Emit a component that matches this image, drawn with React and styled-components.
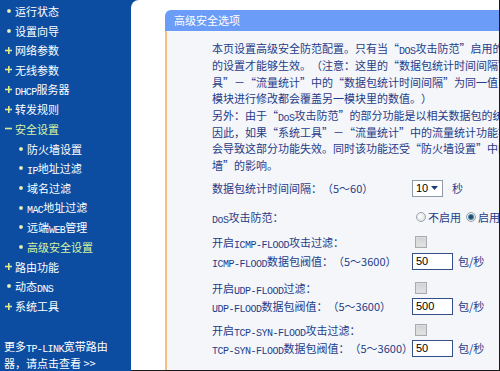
import React from 'react';
import styled, { createGlobalStyle } from 'styled-components';

const Global = createGlobalStyle`
  html, body { margin: 0; padding: 0; }
  body {
    width: 500px;
    height: 371px;
    overflow: hidden;
    font-family: "Noto Sans CJK SC", sans-serif;
    text-spacing-trim: space-all;
  }
`;

const Page = styled.div`
  display: flex;
  width: 500px;
  height: 371px;
  background: #0c4da2;
  overflow: hidden;
`;

const Sidebar = styled.nav`
  width: 131px;
  flex: none;
  display: flex;
  flex-direction: column;
  padding-top: 1px;
  box-sizing: border-box;
  font-size: 11px;
  color: #fff;
`;

const Item = styled.div`
  height: 19.87px;
  display: flex;
  align-items: center;
  padding-left: ${(p) => (p.$sub ? 16 : 4)}px;
  color: ${(p) => (p.$active ? '#d8f4a0' : '#ffffff')};
  white-space: nowrap;
`;

const Label = styled.span`
  line-height: 16px;
`;

const Mark = styled.span`
  width: 9px;
  height: 9px;
  margin-right: 2px;
  display: inline-flex;
  align-items: center;
  justify-content: center;
  flex: none;
`;

const SideLat = styled.span`
  font-family: "Liberation Mono", monospace;
  font-size: 10px;
  line-height: 1;
  letter-spacing: -0.6px;
  vertical-align: -1px;
`;

const Lat = styled.span`
  font-family: "Liberation Mono", monospace;
  font-size: 10px;
  line-height: 1;
  letter-spacing: -0.5px;
  vertical-align: -1px;
`;

const Promo = styled.div`
  margin-top: 22px;
  padding-left: 4px;
  line-height: 16px;
  color: #fff;
  white-space: nowrap;
`;

const Main = styled.main`
  flex: 1;
  display: flex;
  flex-direction: column;
  background: #ffffff;
  border-top-left-radius: 8px;
  border-right: 1px solid #1a1a1a;
  border-bottom: 1px solid #1a1a1a;
  padding: 10px 0 0 34px;
  box-sizing: border-box;
  overflow: hidden;
  min-width: 0;
`;

const Panel = styled.section`
  flex: 1;
  width: 420px;
  display: flex;
  flex-direction: column;
`;

const PanelHead = styled.h2`
  margin: 0;
  height: 21px;
  line-height: 21px;
  padding-left: 9px;
  background: #6b9cf7;
  border-top-left-radius: 6px;
  color: #fff;
  font-size: 11px;
  font-weight: normal;
  white-space: nowrap;
`;

const PanelBody = styled.div`
  flex: 1;
  background: #f4f6fa;
  border-left: 2px solid #f3c07f;
  padding: 9px 0 0 45px;
  color: #1f3c88;
  font-size: 11px;
`;

const Para = styled.div`
  line-height: 16.5px;
  white-space: nowrap;
`;

const Row = styled.div`
  display: grid;
  grid-template-columns: 200px auto;
  align-items: center;
  height: 18px;
  margin-top: ${(p) => p.$mt || 0}px;
  white-space: nowrap;
`;

const Ctl = styled.div`
  display: flex;
  align-items: center;
`;

const SelectBox = styled.div`
  width: 31px;
  height: 17px;
  box-sizing: border-box;
  border: 1px solid #8e9aa6;
  background: #fff;
  display: flex;
  align-items: center;
  justify-content: space-between;
  padding: 0 4px 0 3px;
  font-family: "Liberation Sans", sans-serif;
  font-size: 11px;
  color: #000;
`;

const Unit = styled.span`
  margin-left: ${(p) => p.$ml || 0}px;
`;

const RadioDot = styled.span`
  width: 10px;
  height: 10px;
  box-sizing: border-box;
  border-radius: 50%;
  border: 1px solid #9aa4ad;
  background: radial-gradient(circle at 40% 40%, #ffffff, #d6d8da);
  margin: 0 2px 0 ${(p) => p.$ml || 0}px;
  display: inline-flex;
  align-items: center;
  justify-content: center;
  &::after {
    content: '';
    display: ${(p) => (p.$on ? 'block' : 'none')};
    width: 4px;
    height: 4px;
    border-radius: 50%;
    background: #1f4e6c;
    box-shadow: 0 0 0 1px #4b86a8;
  }
`;

const Check = styled.span`
  width: 12px;
  height: 12px;
  box-sizing: border-box;
  margin-left: 3px;
  border: 1px solid #a9abae;
  background: linear-gradient(#cfd0d2, #e4e5e6);
  box-shadow: inset 0 0 0 1px #dcdcdc;
`;

const NumInput = styled.div`
  width: 41px;
  height: 17px;
  box-sizing: border-box;
  border: 1px solid #34508a;
  background: #fff;
  padding-left: 3px;
  display: flex;
  align-items: center;
  font-family: "Liberation Sans", sans-serif;
  font-size: 11px;
  color: #000;
`;

function Bullet({ kind }) {
  const c = '#dcec8c';
  if (kind === 'plus')
    return (
      <svg width="7" height="7" viewBox="0 0 7 7">
        <rect x="3" y="0" width="1.6" height="7" fill={c} />
        <rect x="0" y="2.7" width="7" height="1.6" fill={c} />
      </svg>
    );
  if (kind === 'minus')
    return (
      <svg width="7" height="7" viewBox="0 0 7 7">
        <rect x="0" y="2.7" width="7" height="1.6" fill={c} />
      </svg>
    );
  return (
    <svg width="4" height="4" viewBox="0 0 4 4">
      <rect x="0.3" y="0.3" width="3.4" height="3.4" rx="1" fill="#eef5b4" />
    </svg>
  );
}

const menu = [
  { k: 'dot', t: '运行状态' },
  { k: 'dot', t: '设置向导' },
  { k: 'plus', t: '网络参数' },
  { k: 'plus', t: '无线参数' },
  { k: 'plus', t: <><SideLat>DHCP</SideLat>服务器</> },
  { k: 'plus', t: '转发规则' },
  { k: 'minus', t: '安全设置', active: true },
  { k: 'dot', t: '防火墙设置', sub: true },
  { k: 'dot', t: <><SideLat>IP</SideLat>地址过滤</>, sub: true },
  { k: 'dot', t: '域名过滤', sub: true },
  { k: 'dot', t: <><SideLat>MAC</SideLat>地址过滤</>, sub: true },
  { k: 'dot', t: <>远端<SideLat>WEB</SideLat>管理</>, sub: true },
  { k: 'dot', t: '高级安全设置', sub: true, active: true },
  { k: 'plus', t: '路由功能' },
  { k: 'dot', t: <>动态<SideLat>DNS</SideLat></> },
  { k: 'plus', t: '系统工具' },
];

function Arrow() {
  return (
    <svg width="7" height="4" viewBox="0 0 7 4">
      <path d="M0 0 H7 L3.5 4 Z" fill="#1d3a7a" />
    </svg>
  );
}

export default function App() {
  return (
    <>
      <Global />
      <Page lang="zh-CN">
        <Sidebar>
          {menu.map((m, i) => (
            <Item key={i} $sub={m.sub} $active={m.active}>
              <Mark>
                <Bullet kind={m.k} />
              </Mark>
              <Label>{m.t}</Label>
            </Item>
          ))}
          <Promo>
            更多<SideLat>TP-LINK</SideLat>宽带路由
            <br />
            器，请点击查看 &gt;&gt;
          </Promo>
        </Sidebar>
        <Main>
          <Panel>
            <PanelHead>高级安全选项</PanelHead>
            <PanelBody>
              <Para>
                本页设置高级安全防范配置。只有当“<Lat>DOS</Lat>攻击防范”启用的时候，以下
                <br />
                的设置才能够生效。（注意：这里的“数据包统计时间间隔”与“系统工
                <br />
                具”－“流量统计”中的“数据包统计时间间隔”为同一值，在任一
                <br />
                模块进行修改都会覆盖另一模块里的数值。）
                <br />
                另外：由于“<Lat>DoS</Lat>攻击防范”的部分功能是以相关数据包的统计为基础的，
                <br />
                因此，如果“系统工具”－“流量统计”中的流量统计功能被关闭，将
                <br />
                会导致这部分功能失效。同时该功能还受“防火墙设置”中的总开关“防火
                <br />
                墙”的影响。
              </Para>

              <Row $mt={6}>
                <span>数据包统计时间间隔：（5～60）</span>
                <Ctl>
                  <SelectBox>
                    10
                    <Arrow />
                  </SelectBox>
                  <Unit $ml={9}>秒</Unit>
                </Ctl>
              </Row>

              <Row $mt={11}>
                <span>
                  <Lat>DoS</Lat>攻击防范：
                </span>
                <Ctl>
                  <RadioDot $ml={4} />
                  <span>不启用</span>
                  <RadioDot $ml={5} $on />
                  <span>启用</span>
                </Ctl>
              </Row>

              <Row $mt={7}>
                <span>
                  开启<Lat>ICMP-FLOOD</Lat>攻击过滤：
                </span>
                <Ctl>
                  <Check />
                </Ctl>
              </Row>
              <Row $mt={1}>
                <span>
                  <Lat>ICMP-FLOOD</Lat>数据包阀值：（5～3600）
                </span>
                <Ctl>
                  <NumInput>50</NumInput>
                  <Unit $ml={5}>包/秒</Unit>
                </Ctl>
              </Row>

              <Row $mt={9}>
                <span>
                  开启<Lat>UDP-FLOOD</Lat>过滤：
                </span>
                <Ctl>
                  <Check />
                </Ctl>
              </Row>
              <Row>
                <span>
                  <Lat>UDP-FLOOD</Lat>数据包阀值：（5～3600）
                </span>
                <Ctl>
                  <NumInput>500</NumInput>
                  <Unit $ml={5}>包/秒</Unit>
                </Ctl>
              </Row>

              <Row $mt={6}>
                <span>
                  开启<Lat>TCP-SYN-FLOOD</Lat>攻击过滤：
                </span>
                <Ctl>
                  <Check />
                </Ctl>
              </Row>
              <Row>
                <span>
                  <Lat>TCP-SYN-FLOOD</Lat>数据包阀值：（5～3600）
                </span>
                <Ctl>
                  <NumInput>50</NumInput>
                  <Unit $ml={5}>包/秒</Unit>
                </Ctl>
              </Row>
            </PanelBody>
          </Panel>
        </Main>
      </Page>
    </>
  );
}
